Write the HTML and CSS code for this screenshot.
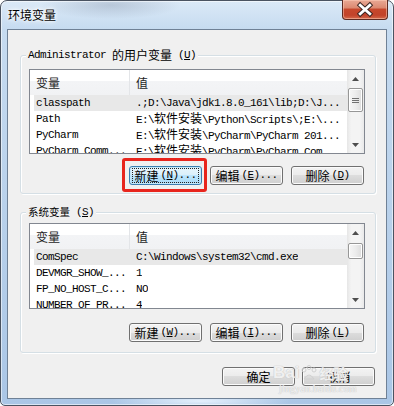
FILE: index.html
```html
<!DOCTYPE html>
<html>
<head>
<meta charset="utf-8">
<title>环境变量</title>
<link rel="stylesheet" href="styles.css">
</head>
<body>
<div class="window">
  <div class="titlebar">
    <span class="title">环境变量</span>
    <div class="close">
      <svg width="46" height="19" viewBox="0 0 46 19">
        <path d="M18 5 L28 14 M28 5 L18 14" stroke="#3a2420" stroke-width="5" stroke-linecap="square" fill="none"/>
        <path d="M18 5 L28 14 M28 5 L18 14" stroke="#ffffff" stroke-width="3" stroke-linecap="square" fill="none"/>
      </svg>
    </div>
  </div>
  <div class="client">
    <div class="group g1">
      <span class="legend"><span class="m">Administrator </span><span class="cj">的用户变量</span><span class="m"> (<u>U</u>)</span></span>
      <div class="list l1">
        <div class="list-main">
          <div class="hdr"><div class="c1">变量</div><div class="c2">值</div></div>
          <div class="row sel"><div class="c1">classpath</div><div class="c2">.;D:\Java\jdk1.8.0_161\lib;D:\J...</div></div>
          <div class="row"><div class="c1">Path</div><div class="c2">E:\<span class="cj">软件安装</span>\Python\Scripts\;E:\...</div></div>
          <div class="row"><div class="c1">PyCharm</div><div class="c2">E:\<span class="cj">软件安装</span>\PyCharm\PyCharm 201...</div></div>
          <div class="row"><div class="c1">PyCharm_Comm...</div><div class="c2">E:\<span class="cj">软件安装</span>\PyCharm\PyCharm_Com...</div></div>
        </div>
        <div class="sb">
          <div class="arrow"><svg width="7" height="4" viewBox="0 0 7 4"><path d="M0 4 L3.5 0 L7 4 Z" fill="#4e4e4e"/></svg></div>
          <div class="thumb t1"><svg width="7" height="5" viewBox="0 0 7 5"><path d="M0 0.5 H7 M0 2.5 H7 M0 4.5 H7" stroke="#707070" stroke-width="1"/></svg></div>
          <div class="track"></div>
          <div class="arrow"><svg width="7" height="4" viewBox="0 0 7 4"><path d="M0 0 L3.5 4 L7 0 Z" fill="#4e4e4e"/></svg></div>
        </div>
      </div>
      <div class="btns">
        <div class="btn focus"><span class="cj">新建</span><span class="m">(<u>N</u>)...</span><span class="hl"></span></div>
        <div class="btn"><span class="cj">编辑</span><span class="m">(<u>E</u>)...</span></div>
        <div class="btn"><span class="cj">删除</span><span class="m">(<u>D</u>)</span></div>
      </div>
    </div>

    <div class="group g2">
      <span class="legend"><span class="cj small">系统变量</span><span class="m"> (<u>S</u>)</span></span>
      <div class="list l2">
        <div class="list-main">
          <div class="hdr"><div class="c1">变量</div><div class="c2">值</div></div>
          <div class="row sel"><div class="c1">ComSpec</div><div class="c2">C:\Windows\system32\cmd.exe</div></div>
          <div class="row"><div class="c1">DEVMGR_SHOW_...</div><div class="c2">1</div></div>
          <div class="row"><div class="c1">FP_NO_HOST_C...</div><div class="c2">NO</div></div>
          <div class="row"><div class="c1">NUMBER_OF_PR...</div><div class="c2">4</div></div>
        </div>
        <div class="sb">
          <div class="arrow"><svg width="7" height="4" viewBox="0 0 7 4"><path d="M0 4 L3.5 0 L7 4 Z" fill="#4e4e4e"/></svg></div>
          <div class="thumb t2"></div>
          <div class="track"></div>
          <div class="arrow"><svg width="7" height="4" viewBox="0 0 7 4"><path d="M0 0 L3.5 4 L7 0 Z" fill="#4e4e4e"/></svg></div>
        </div>
      </div>
      <div class="btns b2">
        <div class="btn"><span class="cj">新建</span><span class="m">(<u>W</u>)...</span></div>
        <div class="btn"><span class="cj">编辑</span><span class="m">(<u>I</u>)...</span></div>
        <div class="btn"><span class="cj">删除</span><span class="m">(<u>L</u>)</span></div>
      </div>
    </div>

    <div class="dlg-btns">
      <div class="btn"><span class="cj">确定</span></div>
      <div class="btn"><span class="cj">取消</span></div>
    </div>
  </div>

  <div class="watermark">
    <div class="wm-top"><span>Bai</span><svg width="18" height="16" viewBox="0 0 18 16"><circle cx="4" cy="5" r="2" fill="none" stroke="#d0d0d0"/><circle cx="9" cy="2.5" r="2" fill="none" stroke="#d0d0d0"/><circle cx="14" cy="5" r="2" fill="none" stroke="#d0d0d0"/><path d="M4 14 Q9 6 14 14 Z" fill="none" stroke="#d0d0d0"/></svg><span>经验</span></div>
    <div class="wm-bot">jingyan.baidu.com</div>
  </div>
</div>
</body>
</html>
```

FILE: styles.css
```css
* { box-sizing: border-box; margin: 0; padding: 0; }
html, body { width: 394px; height: 406px; overflow: hidden; background: #ffffff; }
body {
  font-family: "Noto Sans CJK SC", "Noto Sans", sans-serif;
  font-size: 12px;
  color: #000;
}

.window {
  position: relative;
  width: 394px;
  height: 406px;
  border: 1px solid #4a5361;
  border-radius: 7px 7px 5px 5px;
  padding: 0 6px 6px;
  display: flex;
  flex-direction: column;
  background:
    radial-gradient(ellipse 70px 14px at 110px 4px, rgba(110,125,150,0.3), rgba(110,125,150,0) 100%),
    radial-gradient(ellipse 90px 8px at 200px 400px, rgba(235,245,255,0.9), rgba(235,245,255,0) 100%),
    linear-gradient(to bottom, #dbe9f7 0, #c6dbf0 28px, #b6cfea 60%, #aac6e6 100%);
  box-shadow: inset 0 0 0 1px rgba(255,255,255,0.55);
}

.titlebar {
  position: relative;
  height: 28px;
  display: flex;
  align-items: center;
}
.title {
  padding-left: 1px;
  font-size: 12px;
  line-height: 16px;
  color: #000;
  text-shadow: 0 0 4px #fff, 0 0 6px #fff, 0 0 2px #fff;
}
.close {
  position: absolute;
  right: -1px;
  top: -1px;
  width: 46px;
  height: 20px;
  border: 1px solid #5c2a22;
  border-top: none;
  border-radius: 0 0 4px 4px;
  background: linear-gradient(to bottom, #e9a995 0, #dc8a72 40%, #c6472c 50%, #c2432a 80%, #d4694b 100%);
  box-shadow: inset 0 0 0 1px rgba(255,210,190,0.5);
  display: flex;
}

.client {
  flex: 1;
  border: 1px solid #6f8196;
  background: #f0f0f0;
  display: flex;
  flex-direction: column;
}

.m { font-family: "Liberation Mono", monospace; font-size: 11px; letter-spacing: -0.6px; }
.cj { font-family: "Noto Sans CJK SC", sans-serif; font-size: 12px; letter-spacing: 0; }
.cj.small { font-size: 10.5px; }

.group {
  position: relative;
  border: 1px solid #d5dfe5;
  border-radius: 3px;
  box-shadow: 1px 1px 0 #ffffff, inset 1px 1px 0 #ffffff;
}
.g1 { margin: 25px 10px 0 12px; padding: 13px 10px 8px 8px; }
.g2 { margin: 18px 10px 0 12px; padding: 10px 10px 10px 8px; }

.legend {
  position: absolute;
  left: 5px;
  top: -9px;
  height: 16px;
  line-height: 16px;
  padding: 0 2px;
  background: #f0f0f0;
  display: flex;
  align-items: center;
  white-space: pre;
}

.list {
  display: flex;
  width: 336px;
  border: 1px solid #828790;
  background: #ffffff;
  overflow: hidden;
}
.l1 { height: 85px; }
.l2 { height: 86px; }
.list-main { flex: 1; overflow: hidden; }

.hdr {
  display: flex;
  align-items: center;
  height: 25px;
  background: linear-gradient(to bottom, #ffffff 0, #ffffff 45%, #f3f4f6 45%, #f1f2f4 100%);
  color: #1e1e1e;
  font-size: 12px;
}
.hdr .c1 {
  width: 100px;
  height: 100%;
  padding-left: 6px;
  border-right: 1px solid #e3e5e8;
  display: flex;
  align-items: center;
}
.hdr .c2 { padding-left: 6px; }

.row {
  display: flex;
  align-items: center;
  height: 16px;
  line-height: 16px;
  margin-left: 4px;
  font-family: "Liberation Mono", monospace;
  font-size: 11px;
  letter-spacing: -0.6px;
  white-space: pre;
  overflow: hidden;
}
.row .cj { line-height: 15px; }
.row.sel { background: #e8e8e8; }
.row .c1 { width: 96px; flex: none; padding-left: 2px; overflow: hidden; }
.row .c2 { padding-left: 6px; overflow: hidden; }

.sb {
  width: 17px;
  display: flex;
  flex-direction: column;
  background: linear-gradient(to right, #e6e6e6 0, #f4f4f4 25%, #f4f4f4 75%, #e9e9e9 100%);
}
.arrow {
  height: 17px;
  display: flex;
  align-items: center;
  justify-content: center;
}
.track { flex: 1; }
.thumb {
  margin: 0 1px;
  border: 1px solid #979797;
  border-radius: 2px;
  background: linear-gradient(to right, #f6f6f6 0, #ececec 50%, #dcdcdc 100%);
  box-shadow: inset 0 0 0 1px #ffffff;
  display: flex;
  align-items: center;
  justify-content: center;
}
.t1 { height: 24px; margin-top: 1px; }
.t2 { height: 16px; margin-top: 2px; }

.btns {
  display: flex;
  justify-content: flex-end;
  gap: 8px;
  margin-top: 12px;
  padding-right: 1px;
}
.b2 { margin-top: 14px; }

.btn {
  position: relative;
  width: 73px;
  height: 19px;
  border: 1px solid #707070;
  border-radius: 3px;
  background: linear-gradient(to bottom, #f3f3f3 0, #ebebeb 50%, #dddddd 50%, #cfcfcf 100%);
  box-shadow: inset 0 0 0 1px #fbfbfb;
  display: flex;
  align-items: center;
  justify-content: center;
  line-height: 17px;
  white-space: pre;
}
.btn .cj { margin-right: 2px; }
.btn.focus {
  border-color: #3c7fb1;
  background: linear-gradient(to bottom, #e8f5fc 0, #d9effa 50%, #bee6fd 50%, #a7d9f5 100%);
  box-shadow: inset 0 0 0 1px #c5e7f8;
}
.btn.focus::before {
  content: "";
  position: absolute;
  left: 2px;
  top: 1px;
  right: 2px;
  bottom: 1px;
  border: 1px dotted #222;
}
.hl {
  position: absolute;
  left: -8px;
  top: -9px;
  width: 85px;
  height: 34px;
  border: 3px solid #e8251d;
  border-radius: 3px;
}

.dlg-btns {
  display: flex;
  justify-content: flex-end;
  gap: 7px;
  margin: 14px 11px 0 0;
}
.dlg-btns .cj { margin-right: 0; }

.watermark {
  position: absolute;
  left: 272px;
  top: 362px;
  width: 95px;
  color: rgba(255,255,255,0.75);
  text-shadow: 0 0 1px #c4c4c4, 0 0 1px #c4c4c4;
  pointer-events: none;
}
.wm-top {
  display: flex;
  align-items: center;
  gap: 1px;
  font-family: "Liberation Sans", sans-serif;
  font-size: 17px;
  font-weight: bold;
  line-height: 20px;
}
.wm-top span:last-child { font-family: "Noto Sans CJK SC", sans-serif; font-size: 14px; }
.wm-bot {
  font-family: "Liberation Serif", serif;
  font-size: 10px;
  line-height: 12px;
  padding-left: 6px;
  letter-spacing: 0.2px;
}
```
